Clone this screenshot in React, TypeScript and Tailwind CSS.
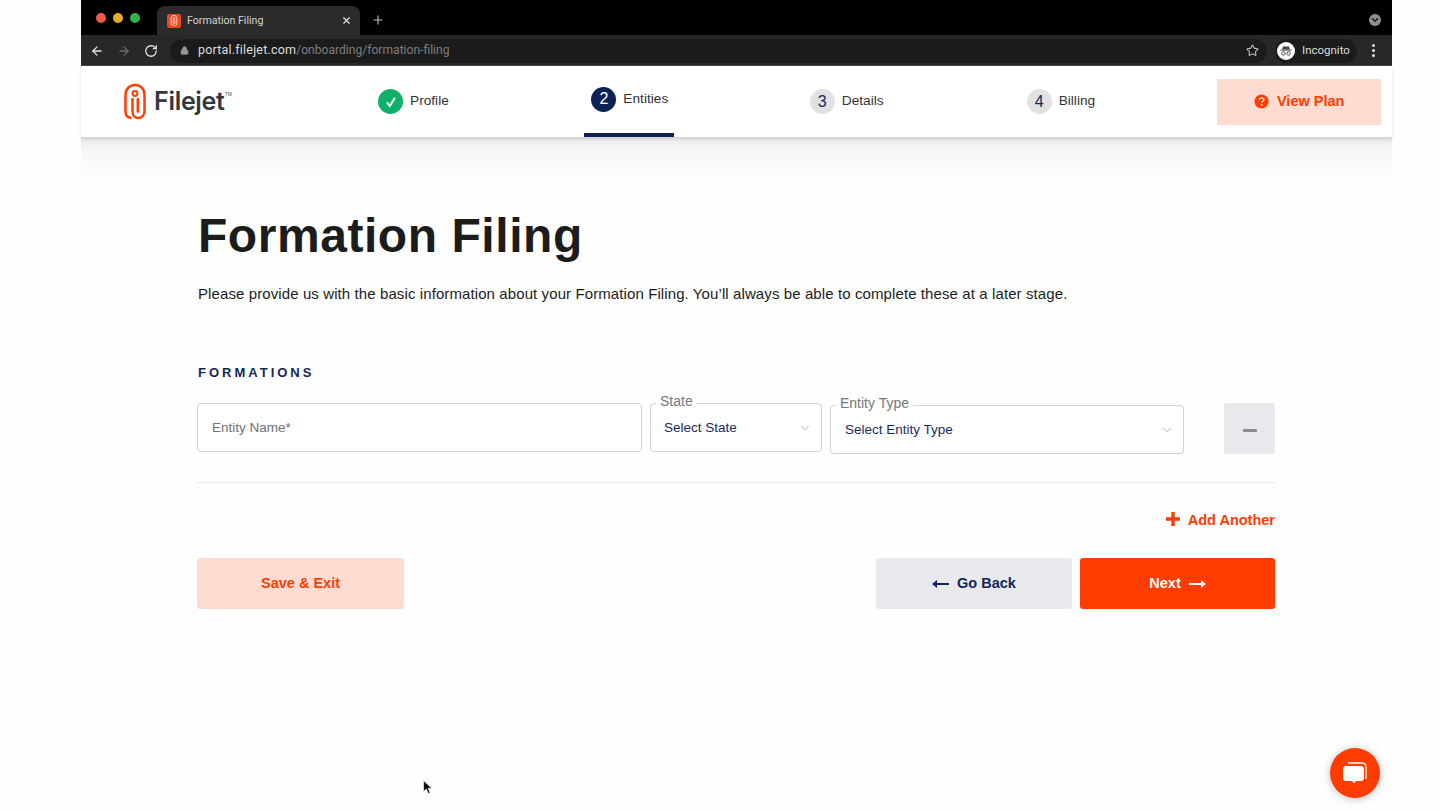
import { ArrowLeft, ArrowRight, ChevronDown, Lock, Plus, RotateCw, Star, X } from 'lucide-react';

const sans = "font-['Liberation_Sans',Arial,sans-serif]";

function PaperClip({ className, color = '#ff3d00' }: { className?: string; color?: string }) {
  return (
    <svg viewBox="0 0 22 36" fill="none" className={className}>
      <path
        d="M6.500 34.500C3.500 33.800 1.500 31.200 1.500 28V11C1.500 5.600 5.800 1.500 11 1.500S20.500 5.600 20.500 11V28C20.500 31.600 17.800 34.500 14.200 34.500S8.500 31.600 8.500 28V15.500"
        stroke={color}
        strokeWidth="2.500"
        strokeLinecap="round"
      />
      <path d="M13.800 15.500V28" stroke={color} strokeWidth="2.500" strokeLinecap="round" />
      <circle cx="11" cy="10" r="2.400" stroke={color} strokeWidth="2" />
    </svg>
  );
}

function BrowserChrome() {
  return (
    <div className="font-['Roboto',sans-serif]">
      <div className="flex h-[35px] items-end bg-black">
        <div className="flex h-[29px] items-center gap-[7px] self-start pl-[15px] pt-[6px]">
          <span className="size-[10px] rounded-full bg-[#ee5a45]" />
          <span className="size-[10px] rounded-full bg-[#e5ab2c]" />
          <span className="size-[10px] rounded-full bg-[#2fb344]" />
        </div>
        <div className="ml-[17px] flex h-[29px] w-[203px] items-center rounded-t-lg bg-[#2b2b2b] pl-[10px] pr-[8px]">
          <span className="flex size-[14px] items-center justify-center rounded-[2px] bg-[#e8471f]">
            <PaperClip className="h-[11px] w-[8px]" color="#ffffff" />
          </span>
          <span className="ml-[6px] flex-1 text-[10.6px] text-[#d4d4d4]">Formation Filing</span>
          <X className="size-[11px] text-[#e8e8e8]" strokeWidth={2.5} />
        </div>
        <Plus className="mb-[8px] ml-[11px] size-[14px] text-[#bdbdbd]" strokeWidth={2} />
        <div className="mb-[9px] ml-auto mr-[11px] flex size-[12px] items-center justify-center rounded-full bg-[#8f8f8f]">
          <ChevronDown className="size-[10px] text-[#222]" strokeWidth={4} />
        </div>
      </div>
      <div className="flex h-[31px] items-center bg-[#282828] shadow-[inset_0_-1px_0_#444]">
        <ArrowLeft className="ml-[9px] size-[14px] text-[#e4e4e4]" strokeWidth={2.2} />
        <ArrowRight className="ml-[13px] size-[14px] text-[#6a6a6a]" strokeWidth={2.2} />
        <RotateCw className="ml-[13px] size-[14px] text-[#e4e4e4]" strokeWidth={2.2} />
        <div className="ml-[12px] flex h-[24px] w-[1097px] items-center rounded-full bg-[#1b1b1b] pl-[10px] pr-[8px]">
          <Lock className="size-[9px] fill-[#999] text-[#999]" />
          <span className="ml-[9px] text-[12.5px] tracking-[0.2px] text-[#dedede]">portal.filejet.com</span>
          <span className="text-[12.1px] text-[#7e7e7e]">/onboarding/formation-filing</span>
          <Star className="ml-auto size-[13px] text-[#bdbdbd]" strokeWidth={2} />
        </div>
        <div className="ml-[8px] flex h-[24px] w-[82px] items-center rounded-full bg-[#1b1b1b] pl-[2px]">
          <span className="flex size-[18px] items-center justify-center rounded-full bg-white">
            <svg viewBox="0 0 14 14" className="size-[14px]">
              <path d="M4 2.500h6l1 3H3z" fill="#444" />
              <rect x="1.500" y="5.600" width="11" height="1" fill="#444" />
              <circle cx="4.400" cy="9.400" r="1.700" fill="none" stroke="#444" strokeWidth="1" />
              <circle cx="9.600" cy="9.400" r="1.700" fill="none" stroke="#444" strokeWidth="1" />
            </svg>
          </span>
          <span className="ml-[7px] text-[11.500px] text-[#dcdcdc]">Incognito</span>
        </div>
        <div className="ml-[15px] flex flex-col gap-[2px]">
          <span className="size-[3px] rounded-full bg-[#e4e4e4]" />
          <span className="size-[3px] rounded-full bg-[#e4e4e4]" />
          <span className="size-[3px] rounded-full bg-[#e4e4e4]" />
        </div>
      </div>
    </div>
  );
}

function Step({ n, label, className }: { n: string; label: string; className: string }) {
  return (
    <div className={`flex items-center gap-[7px] ${className}`}>
      <span className="flex size-[25px] items-center justify-center rounded-full bg-[#e0e1e3] text-[16px] text-[#152a5c]">{n}</span>
      <span className="text-[13.700px] text-[#333]">{label}</span>
    </div>
  );
}

function Nav() {
  return (
    <div className={`${sans} relative z-10 flex h-[71px] items-center bg-white shadow-[0_2px_3px_rgba(0,0,0,0.12)]`}>
      <div className="ml-[43px] flex w-[254px] items-center">
        <PaperClip className="h-[37px] w-[22px]" />
        <span className="ml-[8px] font-['Inter',sans-serif] text-[25px] font-semibold leading-none tracking-[-0.3px] text-[#33373d]">Filejet</span>
        <span className="-mt-[14px] text-[5px] text-[#555]">TM</span>
      </div>
      <div className="flex items-center gap-[7px]">
        <span className="flex size-[25px] items-center justify-center rounded-full bg-[#0eb06a]">
          <svg viewBox="0 0 14 14" className="size-[14px]" fill="none">
            <path d="M3 7.400 5.800 11 11 2.800" stroke="#fff" strokeWidth="2" />
          </svg>
        </span>
        <span className="text-[13.700px] text-[#333]">Profile</span>
      </div>
      <div className="relative ml-[135px] flex h-full w-[90px] items-center justify-center gap-[7px] pb-[5px] pl-[2px]">
        <span className="flex size-[25px] items-center justify-center rounded-full bg-[#0d2255] text-[16px] text-white">2</span>
        <span className="text-[13.700px] text-[#333]">Entities</span>
        <span className="absolute inset-x-0 bottom-0 h-[4px] bg-[#0d2255]" />
      </div>
      <Step n="3" label="Details" className="ml-[136px]" />
      <Step n="4" label="Billing" className="ml-[143px]" />
      <button className="ml-[122px] flex h-[46px] w-[164px] items-center justify-center gap-[8px] bg-[#ffdcd2] text-[14.500px] font-bold text-[#ff3d00]">
        <svg viewBox="0 0 16 16" className="size-[15px]">
          <circle cx="8" cy="8" r="7.500" fill="#ff3d00" />
          <path d="M5.600 6.200C5.800 4.900 6.800 4.200 8.100 4.200 9.500 4.200 10.500 5 10.500 6.200 10.500 7.800 8.200 7.800 8.200 9.400" stroke="#ffdcd2" strokeWidth="1.700" fill="none" />
          <circle cx="8.200" cy="11.800" r="1.100" fill="#ffdcd2" />
        </svg>
        View Plan
      </button>
    </div>
  );
}

function SelectBox({ label, value, className }: { label: string; value: string; className: string }) {
  return (
    <div className={`relative flex h-[49px] items-center justify-between rounded-[4px] border border-[#d3d4d6] bg-white pr-[9px] ${className}`}>
      <span className="absolute -top-[11px] left-[5px] bg-white px-[4px] text-[14px] leading-[16px] text-[#75777b]">{label}</span>
      <span className="pt-px text-[13.500px] text-[#1a2c5c]">{value}</span>
      <ChevronDown className="size-[14px] text-[#9a9ca0]" strokeWidth={1.300} />
    </div>
  );
}

function Form() {
  return (
    <div className={`${sans} ml-[116px] w-[1078px] pt-[68px]`}>
      <h1 className="pl-px text-[48px] font-bold leading-[62px] tracking-[0.55px] text-[#1c1c1c]">Formation Filing</h1>
      <p className="mt-[17px] pl-px text-[15px] leading-[20px] tracking-[0.1px] text-[#1c1c1c]">
        Please provide us with the basic information about your Formation Filing. You’ll always be able to complete these at a later stage.
      </p>
      <h2 className="mt-[61px] pl-px text-[13px] font-bold leading-[16px] tracking-[3px] text-[#14275a]">FORMATIONS</h2>
      <div className="mt-[22px] flex items-start gap-[8px]">
        <div className="flex h-[49px] w-[445px] items-center rounded-[4px] border border-[#d3d4d6] bg-white pl-[14px] pt-px text-[13.500px] text-[#6f7175]">Entity Name*</div>
        <SelectBox label="State" value="Select State" className="w-[172px] pl-[13px]" />
        <SelectBox label="Entity Type" value="Select Entity Type" className="mt-[2px] w-[354px] pl-[14px]" />
        <button className="ml-[32px] flex h-[51px] w-[51px] items-center justify-center rounded-[2px] bg-[#e7e9ec] pt-[3px]">
          <span className="h-[3px] w-[14px] rounded-[1px] bg-[#8a8c90]" />
        </button>
      </div>
      <div className="mt-[28px] h-px bg-[#e8e8e8]" />
      <div className="mt-[27px] flex items-center justify-end gap-[8px] text-[14.500px] font-bold leading-[20px] text-[#ff3d00]">
        <svg viewBox="0 0 14 14" className="-mt-[2px] size-[14px]" fill="#ff3d00">
          <path d="M5.300 0h3.400v5.300H14v3.400H8.700V14H5.300V8.700H0V5.300h5.300z" />
        </svg>
        Add Another
      </div>
      <div className="mt-[28px] flex text-[14.500px] font-bold">
        <button className="h-[51px] w-[207px] rounded-[3px] bg-[#ffdcd2] text-[#ff3d00]">Save &amp; Exit</button>
        <button className="ml-auto flex h-[51px] w-[196px] items-center justify-center gap-[8px] rounded-[3px] bg-[#e7e9ec] text-[#14275a]">
          <svg viewBox="0 0 17 10" className="h-[10px] w-[17px]" fill="#14275a"><path d="M0 5 5 1v3h12v2H5v3z" /></svg>
          Go Back
        </button>
        <button className="ml-[8px] flex h-[51px] w-[195px] items-center justify-center gap-[8px] rounded-[3px] bg-[#ff3d00] text-white">
          Next
          <svg viewBox="0 0 17 10" className="h-[10px] w-[17px]" fill="#fff"><path d="M17 5 12 1v3H0v2h12v3z" /></svg>
        </button>
      </div>
    </div>
  );
}

export default function App() {
  return (
    <div className="relative h-[810px] w-[1440px] overflow-hidden bg-[#fefefe] pl-[81px]">
      <div className="w-[1311px]">
        <BrowserChrome />
        <Nav />
        <div className="h-[45px] bg-gradient-to-b from-[#e9e9e9] via-[#f7f7f7] via-30% to-[#fefefe]" />
        <div className="-mt-[45px]">
          <Form />
        </div>
      </div>
      <div className="absolute left-[1330px] top-[748px] flex size-[50px] items-center justify-center rounded-full bg-[#ff3d00] shadow-[0_1px_8px_rgba(0,0,0,0.25)]">
        <svg viewBox="0 0 28 26" className="h-[26px] w-[28px]">
          <path d="M7 3h14c2.500 0 4 1.500 4 4v12" fill="none" stroke="#fff" strokeWidth="1.300" />
          <path d="M5 6h15c1.700 0 3 1.300 3 3v9c0 1.700-1.300 3-3 3h-5l-2 2.500L11 21H5c-1.700 0-3-1.300-3-3V9c0-1.700 1.300-3 3-3z" fill="#fff" />
        </svg>
      </div>
      <svg viewBox="0 0 10 15" className="absolute left-[423px] top-[780px] h-[15px] w-[10px]">
        <path d="M0.500 0.500v11l2.800-2.500 2 4.500 1.800-.8-2-4.400h3.700z" fill="#111" stroke="#fff" strokeWidth="0.600" />
      </svg>
    </div>
  );
}
